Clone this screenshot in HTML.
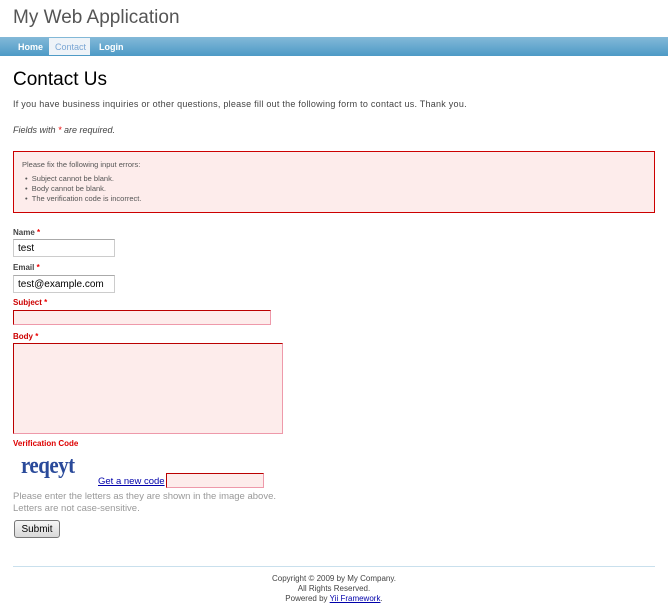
<!DOCTYPE html>
<html><head><meta charset="utf-8"><style>
*{margin:0;padding:0;box-sizing:border-box}
body{width:668px;height:613px;background:#fff;font-family:"Liberation Sans",Arial,sans-serif;position:relative;overflow:hidden;color:#555}
.a{position:absolute;white-space:nowrap}
.nav{position:absolute;left:0;top:37px;width:668px;height:19px;background:linear-gradient(#83b9d8,#4d9ac6)}
.nav span{position:absolute;top:5px;font-size:9px;font-weight:bold;color:#fff}
.req{color:#e00}
label.l{font-size:8px;font-weight:bold;color:#444}
label.e{font-size:8px;font-weight:bold;color:#c00}
.inp{position:absolute;border:1px solid #ccc;border-top-color:#aaa;background:#fff;font-size:10px;color:#000;padding:3px 4px}
.err{position:absolute;border:1px solid #b00;border-right-color:#e9a;border-bottom-color:#e9a;background:#fdeceb}
</style></head><body>
<div class="a" style="left:13px;top:7px;font-size:19px;color:#555">My Web Application</div>
<div class="nav">
<span style="left:18px">Home</span>
<div style="position:absolute;left:49px;top:1px;width:41px;height:17px;background:#eef3f8"></div>
<span style="left:55px;color:#7aa6d4;font-weight:normal">Contact</span>
<span style="left:99px">Login</span>
</div>
<div class="a" style="left:13px;top:69px;font-size:19px;color:#000">Contact Us</div>
<div class="a" style="left:13px;top:99px;font-size:9px;color:#444;letter-spacing:0.25px">If you have business inquiries or other questions, please fill out the following form to contact us. Thank you.</div>
<div class="a" style="left:13px;top:125px;font-size:9px;color:#444;font-style:italic">Fields with <span class="req">*</span> are required.</div>
<div style="position:absolute;left:13px;top:151px;width:642px;height:62px;border:1px solid #c00;background:#fdeceb"></div>
<div class="a" style="left:22px;top:160px;font-size:7.5px;color:#555">Please fix the following input errors:</div>
<div class="a" style="left:25px;top:174px;font-size:7.5px;color:#555;line-height:10px">• &nbsp;Subject cannot be blank.<br>• &nbsp;Body cannot be blank.<br>• &nbsp;The verification code is incorrect.</div>
<label class="a l" style="left:13px;top:228px">Name <span class="req">*</span></label>
<div class="inp" style="left:13px;top:239px;width:102px;height:18px">test</div>
<label class="a l" style="left:13px;top:263px">Email <span class="req">*</span></label>
<div class="inp" style="left:13px;top:275px;width:102px;height:18px">test@example.com</div>
<label class="a e" style="left:13px;top:298px">Subject <span class="req">*</span></label>
<div class="err" style="left:13px;top:310px;width:258px;height:15px"></div>
<label class="a e" style="left:13px;top:332px">Body <span class="req">*</span></label>
<div class="err" style="left:13px;top:343px;width:270px;height:91px"></div>
<label class="a e" style="left:13px;top:439px;color:#d00">Verification Code</label>
<div class="a" style="left:21px;top:451px;font-family:'Liberation Serif',serif;font-size:22px;font-weight:bold;color:#2a4a9a;letter-spacing:-0.5px;transform-origin:left top;transform:scale(0.95,1.1)">reqeyt</div>
<div class="a" style="left:98px;top:476px;font-size:9.5px;color:#00a;text-decoration:underline">Get a new code</div>
<div class="err" style="left:166px;top:473px;width:98px;height:15px"></div>
<div class="a" style="left:13px;top:491px;font-size:9.5px;color:#999;line-height:12px">Please enter the letters as they are shown in the image above.<br>Letters are not case-sensitive.</div>
<div class="a" style="left:14px;top:520px;width:46px;height:18px;border:1px solid #777;border-radius:3px;background:linear-gradient(#f6f6f6,#d8d8d8);font-size:10px;color:#000;text-align:center;line-height:18px">Submit</div>
<div style="position:absolute;left:13px;top:566px;width:642px;height:1px;background:#c9e0ed"></div>
<div class="a" style="left:0;width:668px;top:574px;text-align:center;font-size:8px;line-height:10px;color:#444">Copyright © 2009 by My Company.<br>All Rights Reserved.<br>Powered by <span style="color:#00a;text-decoration:underline">Yii Framework</span>.</div>
</body></html>
